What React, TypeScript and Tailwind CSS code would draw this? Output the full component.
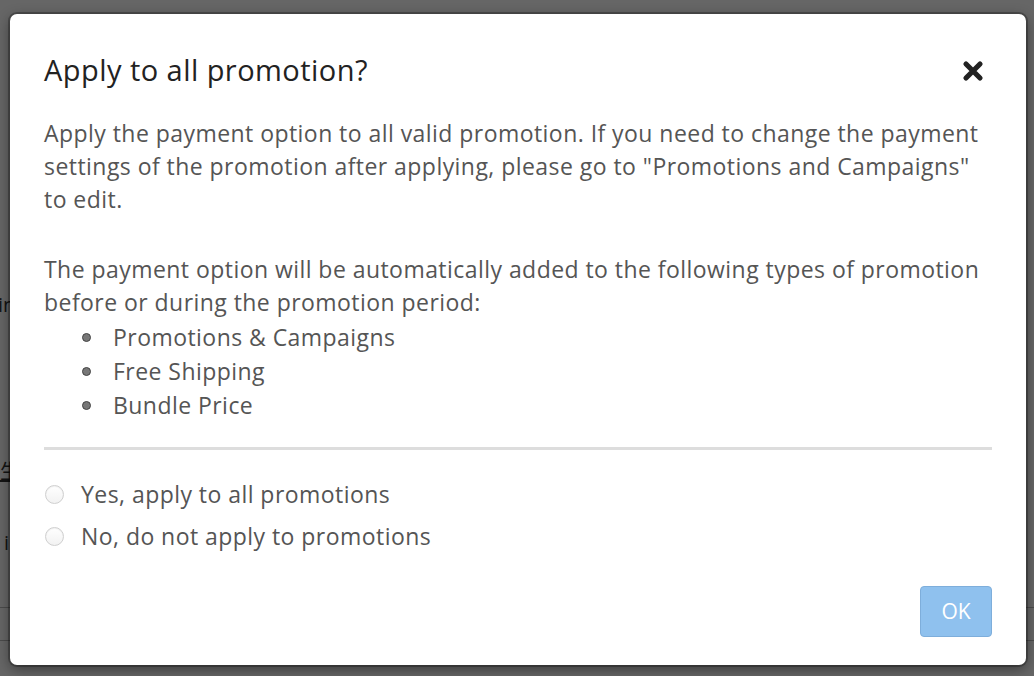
import React from "react";

const Radio = (props: { label: string }) => (
  <label className="flex items-center h-[42px] cursor-pointer">
    <span className="ml-[1px] w-[19px] h-[19px] rounded-full border border-[#cfcfcf] bg-gradient-to-b from-white to-[#f2f2f2] shadow-[inset_0_1px_1px_rgba(0,0,0,0.06)]" />
    <span className="ml-[17px] text-[23px] tracking-[0.45px] text-[#555]">{props.label}</span>
  </label>
);

const Bullet = (props: { children: React.ReactNode }) => (
  <li className="flex items-center h-[34px]">
    <span className="ml-[38px] w-[9px] h-[9px] rounded-full bg-[#777] border border-[#444]" />
    <span className="ml-[22px]">{props.children}</span>
  </li>
);

const App = () => {
  return (
    <div
      className="relative w-[1034px] h-[676px] overflow-hidden bg-white"
      style={{ fontFamily: '"Open Sans", "Noto Sans CJK SC", sans-serif' }}
    >
      {/* page behind the dialog */}
      <div className="flex flex-col text-[20px] text-[#333] pt-[288px]">
        <div className="h-[34px] leading-[34px] -ml-[2px]">in</div>
        <div className="h-[165px] pt-[135px] leading-[30px] underline">生</div>
        <div className="h-[120px] pt-[41px] leading-[30px] pl-[4px]">i</div>
        <div className="border-t border-[#bbb] h-[33px]" />
        <div className="border-t border-[#bbb]" />
      </div>

      {/* backdrop */}
      <div className="absolute inset-0 bg-black/60" />

      {/* dialog */}
      <div className="absolute left-[10px] top-[14px] w-[1016px] h-[651px] bg-white rounded-[7px] shadow-[0_0_0_2px_rgba(0,0,0,0.25),0_4px_14px_rgba(0,0,0,0.45)] flex flex-col px-[34px]">
        <div className="flex justify-between items-start pt-[36px] h-[103px]">
          <h2 className="text-[29px] tracking-[0.45px] leading-[40px] text-[#222]">Apply to all promotion?</h2>
          <button className="mt-[10px] mr-[8px] w-[22px] h-[22px] flex items-center justify-center">
            <svg viewBox="0 0 22 22" width="22" height="22">
              <path d="M4 4 L18 18 M18 4 L4 18" stroke="#222" strokeWidth="5.2" strokeLinecap="round" />
            </svg>
          </button>
        </div>

        <div className="text-[23px] tracking-[0.45px] leading-[33px] text-[#555]">
          <p>
            Apply the payment option to all valid promotion. If you need to change the payment settings of the
            promotion after applying, please go to "Promotions and Campaigns" to edit.
          </p>
          <p className="mt-[37px]">
            The payment option will be automatically added to the following types of promotion before or during the
            promotion period:
          </p>
          <ul className="pt-[1px]">
            <Bullet>Promotions &amp; Campaigns</Bullet>
            <Bullet>Free Shipping</Bullet>
            <Bullet>Bundle Price</Bullet>
          </ul>
        </div>

        <div className="mt-[25px] h-[3px] bg-[#ddd]" />

        <div className="flex flex-col pt-[23px]">
          <Radio label="Yes, apply to all promotions" />
          <Radio label="No, do not apply to promotions" />
        </div>

        <div className="flex justify-end pt-[29px]">
          <button className="w-[72px] h-[51px] rounded-[4px] bg-[#8fc1ee] border border-[#7eaedb] text-white text-[21px]">
            OK
          </button>
        </div>
      </div>
    </div>
  );
};

export default App;
